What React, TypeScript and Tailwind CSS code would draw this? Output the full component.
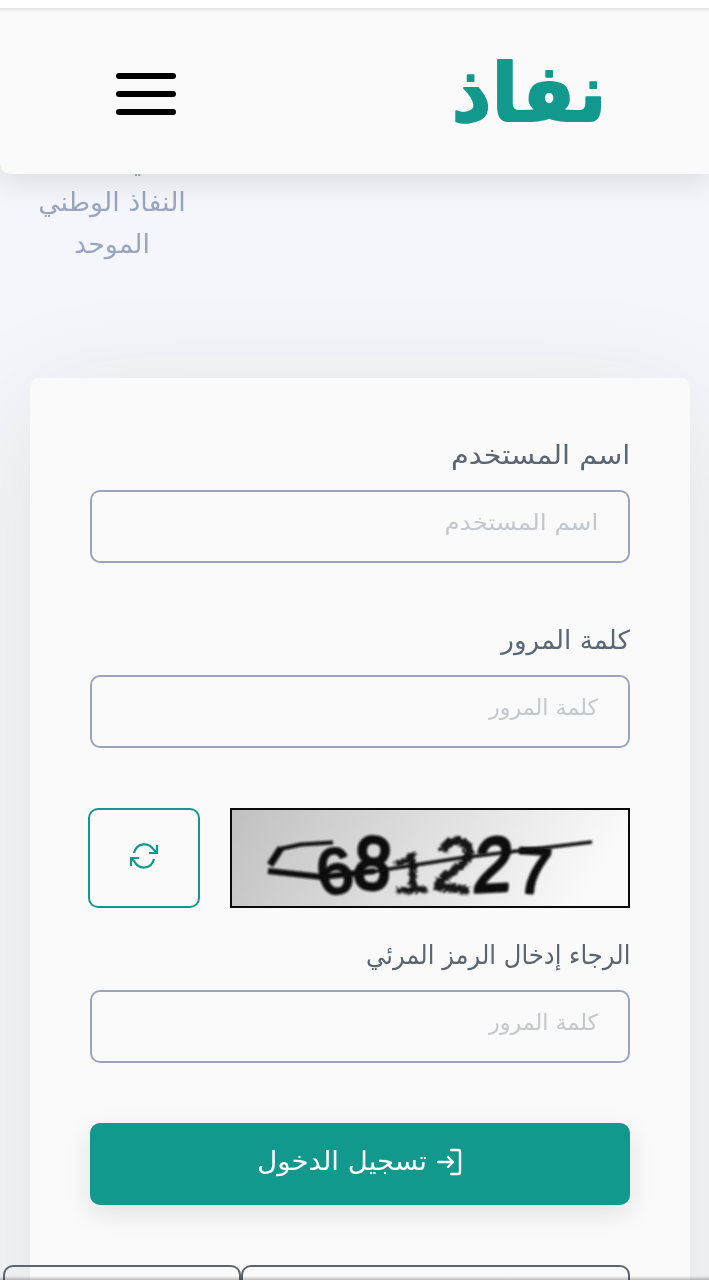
import { useState } from 'react';

interface FieldProps {
  id: string;
  label: string;
  placeholder: string;
  labelClass: string;
  placeholderClass: string;
}

function Field({ id, label, placeholder, labelClass, placeholderClass }: FieldProps) {
  const [value, setValue] = useState('');

  return (
    <div>
      <label htmlFor={id} className="flex h-[52px] text-[26px] text-[#5b6673]">
        <span className={`origin-right whitespace-nowrap leading-[35px] ${labelClass}`}>{label}</span>
      </label>
      <div className="relative h-[73px] rounded-[10px] border-2 border-[#9aa4bd]">
        <input
          id={id}
          value={value}
          onChange={e => setValue(e.target.value)}
          className="h-full w-full bg-transparent px-[30px] text-[22px] outline-none"
        />
        {value === '' && (
          <span className={`pointer-events-none absolute right-[30px] top-[13px] origin-right whitespace-nowrap text-[22px] leading-[36px] text-[#c4c7cb] ${placeholderClass}`}>
            {placeholder}
          </span>
        )}
      </div>
    </div>
  );
}

function Header() {
  return (
    <header className="relative z-10 flex h-[166px] items-center justify-between rounded-bl-[10px] bg-[#fafafa] pl-[116px] pr-[104px] shadow-[0_8px_30px_rgba(0,0,0,0.11)]">
      <div className="absolute inset-x-0 top-0 h-[4px] bg-gradient-to-b from-black/10 to-transparent" />
      <svg width="152" height="80" viewBox="0 0 152 80" className="overflow-visible" aria-label="نفاذ">
        <text transform="translate(76 70) scale(1.07 1)" textAnchor="middle" textLength="145" lengthAdjust="spacingAndGlyphs" direction="rtl" fontSize="80" fontWeight="700" fill="#12998d" stroke="#12998d" strokeWidth="2" strokeLinejoin="round">نفاذ</text>
      </svg>
      <button className="mt-[5px] flex w-[60px] flex-col gap-3" aria-label="القائمة">
        <span className="h-[6px] w-full rounded-full bg-black" />
        <span className="h-[6px] w-full rounded-full bg-black" />
        <span className="h-[6px] w-full rounded-full bg-black" />
      </button>
    </header>
  );
}

function Captcha() {
  return (
    <svg width="400" height="100" viewBox="0 0 400 100" className="overflow-visible" fontFamily="'Liberation Sans', sans-serif" direction="ltr">
      <defs>
        <linearGradient id="paper" x1="0" y1="0" x2="1" y2="0.15">
          <stop offset="0" stopColor="#c0c0c0" />
          <stop offset="0.5" stopColor="#dedede" />
          <stop offset="1" stopColor="#fafafa" />
        </linearGradient>
        <filter id="rough" filterUnits="userSpaceOnUse" x="0" y="0" width="400" height="100">
          <feTurbulence type="fractalNoise" baseFrequency="0.35" numOctaves="2" />
          <feDisplacementMap in="SourceGraphic" scale="8" xChannelSelector="R" yChannelSelector="G" />
          <feGaussianBlur stdDeviation="0.9" />
        </filter>
        <filter id="soft" filterUnits="userSpaceOnUse" x="0" y="0" width="400" height="100">
          <feGaussianBlur stdDeviation="0.8" />
        </filter>
      </defs>
      <rect x="1" y="1" width="398" height="98" fill="url(#paper)" stroke="#0a0a0a" strokeWidth="2" />
      <g fill="#0b0b0b" stroke="#0b0b0b" strokeWidth="3" strokeLinejoin="round" filter="url(#soft)">
        <text transform="translate(91 88) rotate(-10)" fontSize="64">6</text>
        <text transform="translate(122 79) rotate(5)" fontSize="74" strokeWidth="4" textLength="37" lengthAdjust="spacingAndGlyphs">8</text>
        <text transform="translate(242 84) rotate(-3) skewX(-8)" fontSize="76" strokeWidth="4" textLength="38" lengthAdjust="spacingAndGlyphs">2</text>
        <text transform="translate(285 84) rotate(3)" fontSize="64" textLength="36" lengthAdjust="spacingAndGlyphs">7</text>
      </g>
      <g fill="#161616" stroke="#161616" strokeWidth="2.500" filter="url(#rough)">
        <text transform="translate(164 85) rotate(-3)" fontSize="58" textLength="35" lengthAdjust="spacingAndGlyphs" fontFamily="'Liberation Mono', monospace">1</text>
        <text transform="translate(201 80) rotate(8)" fontSize="76" textLength="40" lengthAdjust="spacingAndGlyphs" strokeWidth="3">2</text>
      </g>
      <g fill="none" stroke="#0b0b0b" strokeLinejoin="round" filter="url(#soft)">
        <path d="M103 34.500 71 36.500 50 41" strokeWidth="4" />
        <path d="M51 40 40 57" strokeWidth="7" />
        <path d="M38 63 92 69 145 63" strokeWidth="6" />
        <path d="M140 64 230 50 362 34" strokeWidth="3.500" />
      </g>
    </svg>
  );
}

export default function App() {
  return (
    <div dir="rtl" className="h-[1283px] w-full overflow-hidden bg-white pt-2 font-['DejaVu_Sans',sans-serif]">
      <div className="relative h-[1272px] overflow-hidden bg-[#f4f6fb]">
        <Header />

        <section className="flex h-[204px] justify-end">
          <div className="-mt-[35px] w-[224px] scale-x-[1.035] text-center text-[26px] leading-[42px] text-[#9aa6bd]">
            <p className="-mb-px pl-[66px] pt-px">في</p>
            <p>النفاذ الوطني</p>
            <p>الموحد</p>
          </div>
        </section>

        <main className="relative mr-[19px] h-[1100px] w-[660px] rounded-[10px] bg-[#fafafa] px-[60px] pt-[60px] shadow-[0_20px_120px_rgba(50,40,10,0.09)]">
          <Field id="username" label="اسم المستخدم" placeholder="اسم المستخدم" labelClass="scale-x-[1.105]" placeholderClass="scale-x-[1.12]" />
          <div className="h-[60px]" />
          <Field id="password" label="كلمة المرور" placeholder="كلمة المرور" labelClass="scale-x-[1.005]" placeholderClass="scale-x-[1.01]" />

          <div className="-ml-[2px] mb-[30px] mt-[60px] flex h-[100px] justify-between">
            <Captcha />
            <button className="flex w-[112px] items-center justify-center rounded-[10px] border-2 border-[#12998d]" aria-label="تحديث">
              <svg width="28" height="26" viewBox="0 0 28 26" className="-mt-1 overflow-visible" fill="none" stroke="#12998d" strokeWidth="2.200">
                <path d="M4 10C7-1 19-1 24 7L27 10M27 2v8h-8" />
                <path d="M24 16C21 27 9 27 4 18L1 15M1 23v-8h8" />
              </svg>
            </button>
          </div>

          <Field id="captcha" label="الرجاء إدخال الرمز المرئي" placeholder="كلمة المرور" labelClass="scale-x-[0.933]" placeholderClass="scale-x-[1.01]" />

          <button className="mt-[60px] flex h-[82px] w-full items-center justify-center rounded-[10px] bg-[#12998d] pb-[5px] text-[26px] text-white shadow-[0_8px_24px_rgba(0,0,0,0.1)]">
            <svg width="26" height="28" viewBox="0 0 26 28" className="ml-[9px]" fill="none" stroke="currentColor" strokeWidth="2.400" strokeLinecap="round" strokeLinejoin="round">
              <path d="M14 2h7a2 2 0 0 1 2 2v20a2 2 0 0 1-2 2h-7M1 14h15M11 9l5 5-5 5" />
            </svg>
            <span className="mx-[5px] scale-x-[1.06] whitespace-nowrap">تسجيل الدخول</span>
          </button>

          <div className="-ml-[87px] mt-[60px] flex h-[80px]">
            <div className="w-[389px] rounded-[10px] border-2 border-[#5b6770]" />
            <div className="w-[238px] rounded-[10px] border-2 border-[#5b6770]" />
          </div>
        </main>
        <div className="absolute inset-x-0 bottom-0 h-1 bg-gradient-to-b from-transparent to-black/25" />
      </div>
    </div>
  );
}
